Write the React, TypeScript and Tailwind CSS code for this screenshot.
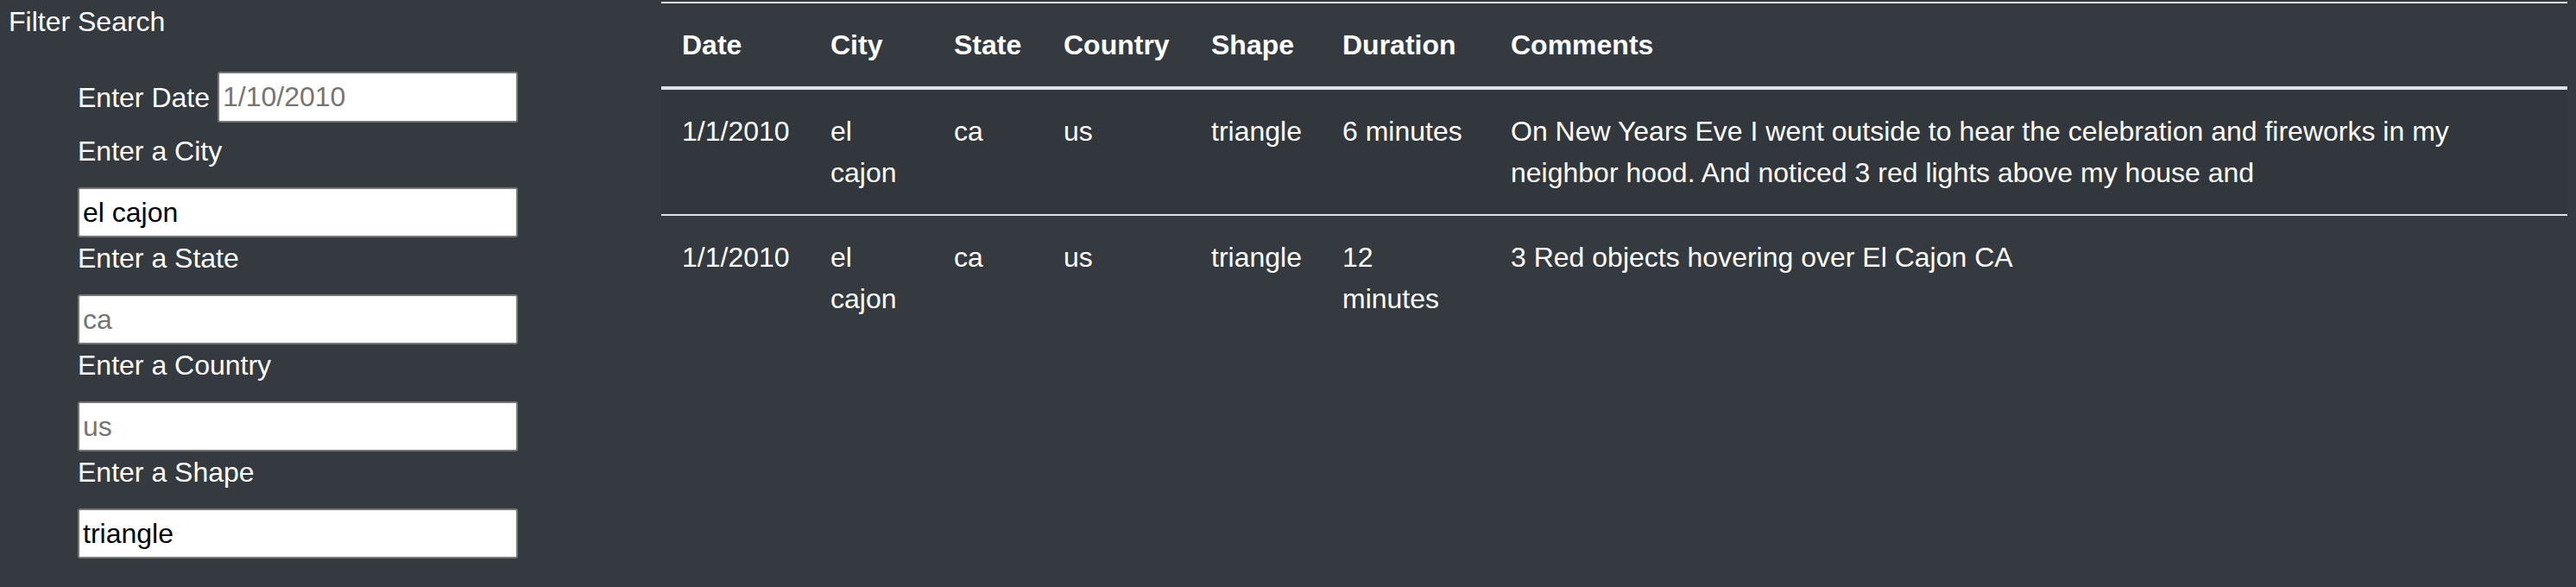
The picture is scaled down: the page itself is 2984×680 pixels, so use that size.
const sightings = [
  {
    date: '1/1/2010',
    city: 'el cajon',
    state: 'ca',
    country: 'us',
    shape: 'triangle',
    duration: '6 minutes',
    comments:
      'On New Years Eve I went outside to hear the celebration and fireworks in my neighbor hood. And noticed 3 red lights above my house and',
  },
  {
    date: '1/1/2010',
    city: 'el cajon',
    state: 'ca',
    country: 'us',
    shape: 'triangle',
    duration: '12 minutes',
    comments: '3 Red objects hovering over El Cajon CA',
  },
]

const headers = ['Date', 'City', 'State', 'Country', 'Shape', 'Duration', 'Comments']

function Field({ label, value, placeholder }: { label: string; value?: string; placeholder?: string }) {
  return (
    <div>
      <label className="block h-[48px] leading-[48px]">{label}</label>
      <input
        type="text"
        readOnly
        defaultValue={value}
        placeholder={placeholder}
        className="mt-[18px] block h-[58px] w-[510px] rounded-[3px] border-2 border-[#767676] bg-white pl-[4px] text-[32px] leading-[40px] text-black placeholder:text-[#757575] outline-none"
      />
    </div>
  )
}

export default function App() {
  return (
    <div
      className="flex h-[680px] w-full overflow-hidden bg-[#343a40] text-[32px] leading-[48px] text-white"
      style={{ fontFamily: '"Liberation Sans", Arial, Helvetica, sans-serif' }}
    >
      <div className="w-[766px] shrink-0">
        <div className="h-[48px] pl-[10px] pt-[1px]">Filter Search</div>
        <div className="pl-[90px]">
          <div className="mt-[35px] flex h-[59px] items-center">
            <label className="mr-[9px]">Enter Date</label>
            <input
              type="text"
              readOnly
              placeholder="1/10/2010"
              className="block h-[59px] w-[348px] rounded-[3px] border-2 border-[#767676] bg-white pl-[4px] text-[32px] leading-[40px] text-black placeholder:text-[#757575] outline-none"
            />
          </div>
          <div className="mt-[9px] flex flex-col">
            <Field label="Enter a City" value="el cajon" />
            <Field label="Enter a State" placeholder="ca" />
            <Field label="Enter a Country" placeholder="us" />
            <Field label="Enter a Shape" value="triangle" />
          </div>
        </div>
      </div>

      <div className="flex-1 pr-[10px] pt-[2px]">
        <table className="w-full table-fixed border-separate border-spacing-0">
          <colgroup>
            <col className="w-[172px]" />
            <col className="w-[143px]" />
            <col className="w-[127px]" />
            <col className="w-[171px]" />
            <col className="w-[152px]" />
            <col className="w-[195px]" />
            <col />
          </colgroup>
          <thead>
            <tr>
              {headers.map((h) => (
                <th
                  key={h}
                  className="border-t-2 border-b-4 border-[#dee2e6] p-6 text-left align-bottom font-bold"
                >
                  {h}
                </th>
              ))}
            </tr>
          </thead>
          <tbody>
            {sightings.map((s, i) => (
              <tr key={i} className={i % 2 === 0 ? 'bg-[#31373d]' : ''}>
                {[s.date, s.city, s.state, s.country, s.shape, s.duration, s.comments].map((v, j) => (
                  <td
                    key={j}
                    className={`p-6 align-top ${i > 0 ? 'border-t-2 border-[#dee2e6]' : ''}`}
                  >
                    {v}
                  </td>
                ))}
              </tr>
            ))}
          </tbody>
        </table>
      </div>
    </div>
  )
}
